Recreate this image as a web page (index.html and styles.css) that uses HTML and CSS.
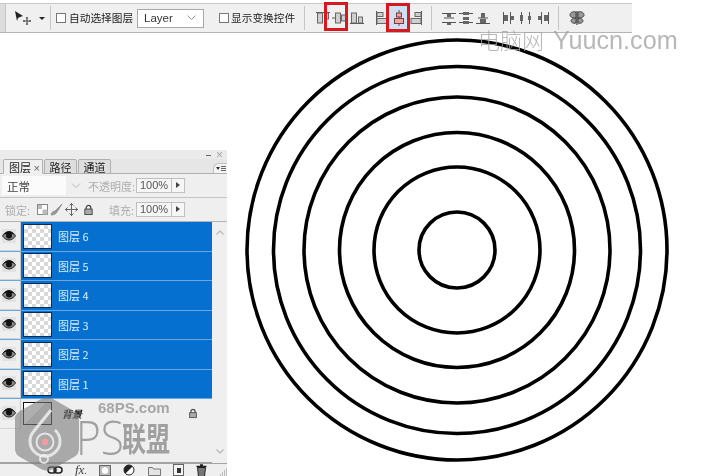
FILE: index.html
```html
<!DOCTYPE html>
<html>
<head>
<title>Photoshop</title>
<meta charset="utf-8">
<link rel="stylesheet" href="styles.css">
</head>
<body>

<svg class="defs" width="0" height="0">
  <symbol id="a-top" viewBox="0 0 16 16"><path class="ln" d="M1 2.500h14"/><rect class="bx" x="2.500" y="3" width="5" height="10"/><rect class="bx" x="9.500" y="3" width="4" height="6"/></symbol>
  <symbol id="a-mid" viewBox="0 0 16 16"><path class="ln" d="M0 8h16"/><rect class="bx" x="3.500" y="3" width="5" height="10"/><rect class="bx" x="9.500" y="5" width="4" height="6"/></symbol>
  <symbol id="a-bot" viewBox="0 0 16 16"><path class="ln" d="M1 13.500h14"/><rect class="bx" x="2.500" y="3" width="5" height="10"/><rect class="bx" x="9.500" y="7" width="4" height="6"/></symbol>
  <symbol id="a-left" viewBox="0 0 16 16"><path class="ln" d="M2.500 1v14"/><rect class="bx" x="3" y="2.500" width="6" height="4"/><rect class="bx" x="3" y="8.500" width="10" height="5"/></symbol>
  <symbol id="a-cen" viewBox="0 0 16 16"><path class="ln" d="M8 0v16"/><rect class="bx red" x="5.500" y="3" width="5" height="4"/><rect class="bx red" x="3.500" y="8.500" width="9" height="5"/></symbol>
  <symbol id="a-right" viewBox="0 0 16 16"><path class="ln" d="M13.500 1v14"/><rect class="bx" x="7" y="2.500" width="6" height="4"/><rect class="bx" x="3" y="8.500" width="10" height="5"/></symbol>
  <symbol id="d-top" viewBox="0 0 16 16"><path class="ln" d="M1 3.500h14M1 12.500h14"/><rect class="dk" x="6" y="4" width="4" height="3"/><rect class="dk" x="6" y="13" width="4" height="2"/><path class="ln" d="M3 8h10"/></symbol>
  <symbol id="d-mid" viewBox="0 0 16 16"><path class="ln" d="M1 3.500h14M1 12.500h14"/><rect class="dk" x="5" y="2" width="6" height="3"/><rect class="dk" x="5" y="7" width="6" height="3"/><rect class="dk" x="5" y="11" width="6" height="3"/></symbol>
  <symbol id="d-bot" viewBox="0 0 16 16"><path class="ln" d="M1 13.500h14M3 8h10"/><rect class="dk" x="6" y="3" width="4" height="5"/><rect class="dk" x="5" y="9" width="6" height="4"/></symbol>
  <symbol id="d-left" viewBox="0 0 16 16"><path class="ln" d="M2.500 2v12M9.500 2v12"/><rect class="dk" x="3" y="5" width="4" height="6"/><rect class="dk" x="10" y="6" width="3" height="4"/></symbol>
  <symbol id="d-cen" viewBox="0 0 16 16"><path class="ln" d="M3.500 2v12M11.500 2v12"/><rect class="dk" x="2" y="5" width="3" height="6"/><rect class="dk" x="10" y="6" width="3" height="4"/></symbol>
  <symbol id="d-right" viewBox="0 0 16 16"><path class="ln" d="M6.500 2v12M13.500 2v12"/><rect class="dk" x="3" y="6" width="3" height="4"/><rect class="dk" x="9" y="5" width="4" height="6"/></symbol>
  <symbol id="eye" viewBox="0 0 14 14"><path d="M0.500 7c2-3 4-4.500 6.500-4.500s4.500 1.500 6.500 4.500c-2 2.500-4 4-6.500 4s-4.500-1.500-6.500-4z" fill="#8a8a8a" stroke="#222"/><path d="M1 6c2-2.500 4-3.500 6-3.500S11 3.500 13 6c-2-1-4-1.200-6-1.200S3 5 1 6z" fill="#111"/><circle cx="7" cy="6.600" r="3" fill="#111"/></symbol>
  <symbol id="lock" viewBox="0 0 12 12"><path d="M3.500 5V3.500a2.500 2.500 0 0 1 5 0V5" fill="none" stroke="#444" stroke-width="1.400"/><rect x="2" y="5" width="8" height="6" fill="#aaa" stroke="#444"/></symbol>
</svg>

<div class="page">

  <div class="toolbar">
    <div class="grip"></div>
    <svg class="move-tool" width="18" height="16" viewBox="0 0 18 16">
      <path d="M1 1l8 5-3 1-2 1-1 3z" fill="#222"/>
      <path d="M13 7v8M9 11h8M12 8h2M12 14h2M10 10v2M16 10v2" stroke="#444" fill="none"/>
    </svg>
    <div class="caret"></div>
    <div class="sep first"></div>
    <div class="check"></div>
    <span class="tool-label">自动选择图层</span>
    <div class="layer-select">
      <span>Layer</span>
      <svg width="9" height="6" viewBox="0 0 9 6"><path d="M0.500 0.500L4.500 4.500 8.500 0.500" fill="none" stroke="#999"/></svg>
    </div>
    <div class="check second"></div>
    <span class="tool-label tight">显示变换控件</span>
    <div class="sep mid"></div>

    <div class="icons icons-a">
      <svg class="ic"><use href="#a-top"/></svg>
      <div class="cell"><svg class="ic"><use href="#a-mid"/></svg><div class="mark mark-a"></div></div>
      <svg class="ic"><use href="#a-bot"/></svg>
    </div>
    <div class="icons icons-b">
      <svg class="ic"><use href="#a-left"/></svg>
      <div class="cell"><div class="mark mark-b"></div><svg class="ic"><use href="#a-cen"/></svg></div>
      <svg class="ic"><use href="#a-right"/></svg>
    </div>
    <div class="sep after"></div>
    <div class="icons icons-c">
      <svg class="ic"><use href="#d-top"/></svg>
      <svg class="ic"><use href="#d-mid"/></svg>
      <svg class="ic"><use href="#d-bot"/></svg>
    </div>
    <div class="icons icons-d">
      <svg class="ic"><use href="#d-left"/></svg>
      <svg class="ic"><use href="#d-cen"/></svg>
      <svg class="ic"><use href="#d-right"/></svg>
    </div>
    <div class="sep last"></div>
    <svg class="ic auto-align" viewBox="0 0 16 16">
      <path d="M7 2C3 1 1 3 1 5s2 3 6 3zM9 2c4-1 6 1 6 3s-2 3-6 3zM7 8c-4 0-5 2-5 3s2 3 5 2zM9 8c4 0 5 2 5 3s-2 3-5 2z" fill="#999" stroke="#444"/>
      <path d="M8 1v14" stroke="#222"/>
    </svg>
  </div>

  <div class="panel">
    <div class="panel-top">
      <span class="collapse"></span>
      <span class="close">×</span>
    </div>
    <div class="tabs">
      <div class="tab active">图层 <i>×</i></div>
      <div class="tab">路径</div>
      <div class="tab">通道</div>
      <div class="menu-btn">
        <span class="menu-arrow"></span>
        <span class="menu-lines"></span>
      </div>
    </div>
    <div class="opt-row blend-row">
      <div class="blend">正常
        <svg width="10" height="6" viewBox="0 0 10 6"><path d="M1 .5l4 4 4-4" fill="none" stroke="#bbb"/></svg>
      </div>
      <span class="opt-label">不透明度:</span>
      <div class="field">100%</div>
      <div class="field-btn"></div>
    </div>
    <div class="opt-row lock-row">
      <span class="opt-label lock-label">锁定:</span>
      <svg class="lock-ic" width="13" height="13" viewBox="0 0 13 13"><rect x="1.500" y="1.500" width="10" height="10" fill="#fff" stroke="#888"/><path d="M2 2h4v4H2zM6.500 6.500h5v5h-5z" fill="#bbb"/></svg>
      <svg class="lock-ic brush" width="13" height="13" viewBox="0 0 13 13"><path d="M1 12c1-3 2-4 4-4l7-7-5 8c-1 2-3 3-6 3z" fill="#999" stroke="#777" stroke-width=".6"/></svg>
      <svg class="lock-ic pos" width="13" height="13" viewBox="0 0 13 13"><path d="M6.500 0v13M0 6.500h13M4.500 2.500l2-2 2 2M4.500 10.500l2 2 2-2M2.500 4.500l-2 2 2 2M10.500 4.500l2 2-2 2" fill="none" stroke="#666"/></svg>
      <svg class="lock-ic full" width="11" height="12" viewBox="0 0 12 12"><use href="#lock"/></svg>
      <span class="opt-label fill-label">填充:</span>
      <div class="field">100%</div>
      <div class="field-btn"></div>
    </div>

    <div class="layers-wrap">
      <div class="layers">
        <div class="layer sel"><div class="eye"><svg width="14" height="14"><use href="#eye"/></svg></div><div class="thumb"></div><span class="name">图层 6</span></div>
        <div class="layer sel"><div class="eye"><svg width="14" height="14"><use href="#eye"/></svg></div><div class="thumb"></div><span class="name">图层 5</span></div>
        <div class="layer sel"><div class="eye"><svg width="14" height="14"><use href="#eye"/></svg></div><div class="thumb"></div><span class="name">图层 4</span></div>
        <div class="layer sel"><div class="eye"><svg width="14" height="14"><use href="#eye"/></svg></div><div class="thumb"></div><span class="name">图层 3</span></div>
        <div class="layer sel"><div class="eye"><svg width="14" height="14"><use href="#eye"/></svg></div><div class="thumb"></div><span class="name">图层 2</span></div>
        <div class="layer sel"><div class="eye"><svg width="14" height="14"><use href="#eye"/></svg></div><div class="thumb"></div><span class="name">图层 1</span></div>
        <div class="layer bg"><div class="eye"><svg width="14" height="14"><use href="#eye"/></svg></div><div class="thumb white"></div><span class="name">背景</span><svg class="bg-lock" width="10" height="11" viewBox="0 0 12 12"><use href="#lock"/></svg></div>
      </div>
      <div class="scrollbar">
        <svg width="8" height="5" viewBox="0 0 8 5"><path d="M.5 4.500L4 1l3.500 3.500" fill="none" stroke="#bbb" stroke-width="1.300"/></svg>
        <svg width="8" height="5" viewBox="0 0 8 5"><path d="M.5.500L4 4 7.500.500" fill="none" stroke="#bbb" stroke-width="1.300"/></svg>
      </div>
    </div>

    <div class="panel-foot">
      <svg width="16" height="8" viewBox="0 0 16 8"><rect x="1" y="1" width="8" height="6" rx="3" fill="none" stroke="#222" stroke-width="1.500"/><rect x="7" y="1" width="8" height="6" rx="3" fill="none" stroke="#222" stroke-width="1.500"/></svg>
      <span class="fx">fx<small>.</small></span>
      <svg width="12" height="11" viewBox="0 0 12 11"><rect x=".5" y=".5" width="11" height="10" fill="#bbb" stroke="#666"/><circle cx="6" cy="5.500" r="3.200" fill="#fff"/></svg>
      <svg width="13" height="12" viewBox="0 0 13 12"><circle cx="6" cy="6" r="5" fill="#fff" stroke="#222"/><path d="M6 1a5 5 0 0 0-3.500 8.500L9.500 2.500A5 5 0 0 0 6 1z" fill="#222"/></svg>
      <svg width="13" height="11" viewBox="0 0 13 11"><path d="M.5 2.500h4l1 1.500h7v6.500H.5z" fill="#e4e4e4" stroke="#777"/></svg>
      <svg width="11" height="12" viewBox="0 0 11 12"><rect x=".5" y=".5" width="10" height="11" fill="#f4f4f4" stroke="#666"/><rect x="4" y="4" width="4" height="5" fill="#333"/></svg>
      <svg width="11" height="13" viewBox="0 0 11 13"><path d="M1.500 3.500h8l-1 9h-6z" fill="#777" stroke="#222"/><path d="M.5 2.500h10M4 1h3" stroke="#222" stroke-width="1.500"/></svg>
      <svg class="resize" width="9" height="9" viewBox="0 0 9 9"><path d="M7.500 1v8M5.500 3v6M3.500 5v4M1.500 7v2" stroke="#bbb"/></svg>
    </div>
  </div>

  <svg class="rings" width="430" height="430" viewBox="0 0 430 430">
    <circle cx="215" cy="215" r="210"/>
    <circle cx="215" cy="215" r="183.500"/>
    <circle cx="215" cy="215" r="153"/>
    <circle cx="215" cy="215" r="117.500"/>
    <circle cx="215" cy="215" r="83"/>
    <circle cx="215" cy="215" r="38"/>
  </svg>

  <div class="wm-top"><span class="wm-cn">电脑网</span> Yuucn.com</div>

  <svg class="wm-logo" width="66" height="74" viewBox="0 0 66 74">
    <path d="M27 2q6-3 12 0l21 12q5 3 5 8v30q0 5-5 8L39 72q-6 3-12 0L6 60q-5-3-5-8V22q0-5 5-8z" fill="#7a7a7a" fill-opacity=".6"/>
    <g fill="none" stroke="#f0f0f0" stroke-opacity=".85">
      <path d="M37 13L20 34a15 15 0 1 0 21-1" stroke-width="3"/>
      <circle cx="31" cy="45" r="8.500" stroke-width="2"/>
      <circle cx="30" cy="62" r="4" stroke-width="2"/>
    </g>
    <circle cx="31" cy="45" r="3.200" fill="#f29ca2"/>
  </svg>
  <div class="wm-site">68PS.com</div>
  <div class="wm-brand"><span class="wm-ps">PS</span><span class="wm-union">联盟</span></div>

</div>

</body>
</html>
```

FILE: styles.css
```css
* {
  box-sizing: border-box;
}

body {
  margin: 0;
  background-color: #fff;
  font-family: "Noto Sans CJK SC", "Liberation Sans", sans-serif;
  color: #333;
}

.defs {
  display: block;
  height: 0;
}

.page {
  position: relative;
  width: 705px;
  height: 476px;
  overflow: hidden;
  padding-top: 3px;
  filter: blur(0.45px);
}

/* option bar */

.toolbar {
  display: flex;
  align-items: center;
  width: 632px;
  height: 30px;
  background-color: #f0f0f0;
  border-top: 1px solid #c8c8c8;
  border-bottom: 1px solid #b4b4b4;
}

.grip {
  width: 6px;
  height: 100%;
  background-color: #dcdcdc;
  border-right: 1px solid #c4c4c4;
}

.move-tool {
  margin-left: 8px;
}

.caret {
  margin-left: 7px;
  width: 0;
  height: 0;
  border-left: 3px solid transparent;
  border-right: 3px solid transparent;
  border-top: 3px solid #222;
}

.sep {
  width: 1px;
  height: 24px;
  background-color: #c6c6c6;
}

.sep.first { margin-left: 5px; }
.sep.mid { margin-left: 9px; }
.sep.after { margin-left: 7px; }
.sep.last { margin-left: 7px; }

.check {
  margin-left: 5px;
  width: 10px;
  height: 10px;
  background-color: #fff;
  border: 1px solid #777;
}

.check.second {
  margin-left: 15px;
}

.tool-label {
  margin-left: 3px;
  width: 64px;
  font-size: 10.700px;
  line-height: 14px;
  white-space: nowrap;
  color: #222;
}

.tool-label.tight {
  margin-left: 2px;
}

.layer-select {
  display: flex;
  align-items: center;
  justify-content: space-between;
  margin-left: 4px;
  width: 67px;
  height: 19px;
  padding: 0 7px 0 6px;
  background-color: #fff;
  border: 1px solid #a8a8a8;
  font-family: "Liberation Sans", sans-serif;
  font-size: 11.500px;
}

.icons {
  display: flex;
  align-items: center;
  gap: 1px;
}

.icons-a { margin-left: 10px; }
.icons-b { margin-left: 9px; }
.icons-c { margin-left: 9px; }
.icons-d { margin-left: 10px; }

.ic {
  display: block;
  width: 16px;
  height: 16px;
}

.auto-align {
  margin-left: 10px;
}

.cell {
  position: relative;
}

.mark {
  position: absolute;
  top: -8px;
  height: 29px;
  border: 3px solid #d8171f;
}

.mark-a {
  left: -8px;
  width: 24px;
}

.mark-b {
  top: -7px;
  left: -5px;
  width: 24px;
  background-color: #cfe0f2;
}

.cell .ic {
  position: relative;
}

.ln {
  fill: none;
  stroke: #555;
}

.bx {
  fill: #cfcfcf;
  stroke: #666;
}

.bx.red {
  fill: #eea6a6;
  stroke: #7a3a3a;
}

.dk {
  fill: #666;
}

/* layers panel */

.panel {
  display: flex;
  flex-direction: column;
  width: 227px;
  height: 326px;
  margin-top: 117px;
  background-color: #efefef;
  font-size: 11px;
}

.panel-top {
  display: flex;
  align-items: center;
  justify-content: flex-end;
  gap: 5px;
  flex: none;
  height: 9px;
  padding-right: 4px;
  background-color: #ebebeb;
}

.collapse {
  width: 5px;
  height: 1px;
  margin-top: 1px;
  background-color: #666;
}

.close {
  font-family: "Liberation Sans", sans-serif;
  font-size: 12px;
  line-height: 8px;
  color: #aaa;
}

.tabs {
  display: flex;
  align-items: flex-end;
  flex: none;
  gap: 1px;
  height: 15px;
  padding-left: 3px;
  background-color: #e6e6e6;
  border-bottom: 1px solid #b0b0b0;
}

.tab {
  width: 33px;
  height: 15px;
  margin-bottom: -1px;
  line-height: 14px;
  text-align: center;
  font-size: 11px;
  background-color: #dedede;
  border: 1px solid #b0b0b0;
  border-radius: 2px 2px 0 0;
  color: #222;
}

.tab:last-of-type {
  width: 35px;
  margin-left: 1px;
}

.tab.active {
  width: 40px;
  padding-left: 5px;
  text-align: left;
  background-color: #f0f0f0;
  border-bottom-color: #f0f0f0;
  white-space: nowrap;
}

.tab i {
  font-style: normal;
  font-family: "Liberation Sans", sans-serif;
  color: #666;
}

.menu-btn {
  display: flex;
  align-items: center;
  justify-content: flex-end;
  gap: 1px;
  margin-left: auto;
  width: 14px;
  height: 10px;
  padding-right: 1px;
  background-color: #f4f4f4;
  border-top: 1px solid #c0c0c0;
  border-left: 1px solid #c0c0c0;
  border-radius: 6px 0 0 0;
}

.menu-arrow {
  width: 0;
  height: 0;
  border-left: 2px solid transparent;
  border-right: 2px solid transparent;
  border-top: 3px solid #333;
}

.menu-lines {
  width: 5px;
  height: 5px;
  border-top: 1px solid #666;
  border-bottom: 1px solid #666;
  background: linear-gradient(#666, #666) center / 100% 1px no-repeat;
}

.opt-row {
  display: flex;
  align-items: center;
  flex: none;
  color: #aaa;
}

.blend-row {
  height: 24px;
  padding-left: 2px;
  border-bottom: 1px solid #c4c4c4;
}

.lock-row {
  height: 24px;
  padding-left: 5px;
  border-bottom: 1px solid #b4b4b4;
}

.blend {
  display: flex;
  align-items: center;
  justify-content: space-between;
  width: 84px;
  height: 19px;
  padding: 0 5px;
  background: linear-gradient(90deg, #fbfbfb 76%, #efefef 76%);
  font-size: 11.500px;
  color: #444;
}

.opt-label {
  flex: none;
  font-size: 11px;
  color: #adadad;
}

.blend-row .opt-label {
  margin-left: 2px;
  width: 48px;
  white-space: nowrap;
}

.lock-label {
  width: 28px;
  white-space: nowrap;
}

.fill-label {
  margin-left: 15px;
  width: 27px;
  white-space: nowrap;
}

.lock-ic {
  flex: none;
  margin-left: 3px;
}

.lock-ic.brush { margin-left: 1px; }
.lock-ic.pos { margin-left: 2px; }
.lock-ic.full { margin-left: 5px; }

.field {
  flex: none;
  width: 36px;
  height: 15px;
  line-height: 13px;
  text-align: center;
  background-color: #f6f6f6;
  border: 1px solid #c0c0c0;
  font-family: "Liberation Sans", sans-serif;
  font-size: 11px;
  color: #555;
}

.field-btn {
  position: relative;
  flex: none;
  width: 13px;
  height: 15px;
  background-color: #f6f6f6;
  border: 1px solid #c0c0c0;
  border-left: none;
}

.field-btn::after {
  content: "";
  position: absolute;
  left: 4px;
  top: 3px;
  border-top: 3px solid transparent;
  border-bottom: 3px solid transparent;
  border-left: 4px solid #444;
}

.layers-wrap {
  display: flex;
  flex: none;
  height: 241px;
}

.layers {
  width: 212px;
  border-bottom: 1px solid #a4a4a4;
}

.layer {
  display: flex;
  align-items: center;
  height: 29.500px;
}

.eye {
  display: flex;
  align-items: center;
  justify-content: center;
  flex: none;
  width: 21px;
  height: 100%;
  padding-right: 3px;
  background-color: #efefef;
  border-bottom: 1px solid #d4d4d4;
  border-right: 1px solid #c8c8c8;
}

.eye svg {
  background-color: #e2e2e2;
}

.thumb {
  flex: none;
  width: 29px;
  height: 25px;
  margin-left: 2px;
  border: 1px solid #111;
  background: repeating-conic-gradient(#d8d8d8 0 25%, #fff 0 50%) 0 0 / 8px 8px;
}

.thumb.white {
  height: 23px;
  background: linear-gradient(135deg, #fff 45%, #dcdcdc 46%);
}

.sel {
  background-color: #0670d0;
  border-bottom: 1px solid #66a8e4;
}

.sel .thumb {
  border-color: #0b2c50;
}

.name {
  margin-left: 6px;
  font-size: 11px;
  color: #d8efff;
}

.bg .name {
  margin-left: 10px;
  font-size: 10px;
  font-weight: 700;
  font-style: italic;
  color: #111;
}

.bg-lock {
  margin-left: auto;
  margin-right: 14px;
}

.scrollbar {
  display: flex;
  flex-direction: column;
  align-items: center;
  justify-content: space-between;
  width: 15px;
  height: 100%;
  padding: 8px 0 9px;
}

.panel-foot {
  display: flex;
  align-items: center;
  flex: 1;
  min-height: 0;
  padding-left: 47px;
  border-top: 1px solid #a4a4a4;
  gap: 12px;
}

.panel-foot svg {
  flex: none;
}

.fx {
  width: 17px;
  line-height: 12px;
  font-family: "Liberation Serif", serif;
  font-style: italic;
  font-size: 13px;
  color: #444;
}

.fx small {
  font-size: 10px;
}

.resize {
  margin-left: auto;
  margin-right: 1px;
  align-self: flex-end;
}

/* artwork */

.rings {
  position: absolute;
  left: 242px;
  top: 35px;
}

.rings circle {
  fill: none;
  stroke: #000;
  stroke-width: 3.600;
}

/* watermarks */

.wm-top {
  position: absolute;
  left: 478px;
  top: 24px;
  font-family: "Liberation Sans", sans-serif;
  font-size: 25.200px;
  line-height: 30px;
  color: #a6a6a6;
  white-space: nowrap;
  opacity: 0.8;
}

.wm-cn {
  margin-right: 2px;
  font-family: "Noto Sans CJK SC", sans-serif;
  font-size: 22px;
  font-weight: 300;
}

.wm-logo {
  position: absolute;
  left: 14px;
  top: 397px;
}

.wm-site {
  position: absolute;
  left: 98px;
  top: 397px;
  font-family: "Liberation Sans", sans-serif;
  font-weight: 700;
  font-size: 15px;
  line-height: 22px;
  color: #9a9a9a;
  opacity: 0.85;
}

.wm-brand {
  position: absolute;
  left: 76px;
  top: 414px;
  display: flex;
  color: #777;
  opacity: 0.65;
}

.wm-ps {
  display: inline-block;
  width: 46px;
  font-family: "Open Sans", sans-serif;
  font-weight: 300;
  font-size: 47px;
  line-height: 47px;
  transform: scaleX(0.9);
  transform-origin: left top;
}

.wm-union {
  display: inline-block;
  width: 48px;
  font-size: 33px;
  line-height: 47px;
  font-weight: 700;
  white-space: nowrap;
  transform: scaleX(0.73);
  transform-origin: left top;
}
```
